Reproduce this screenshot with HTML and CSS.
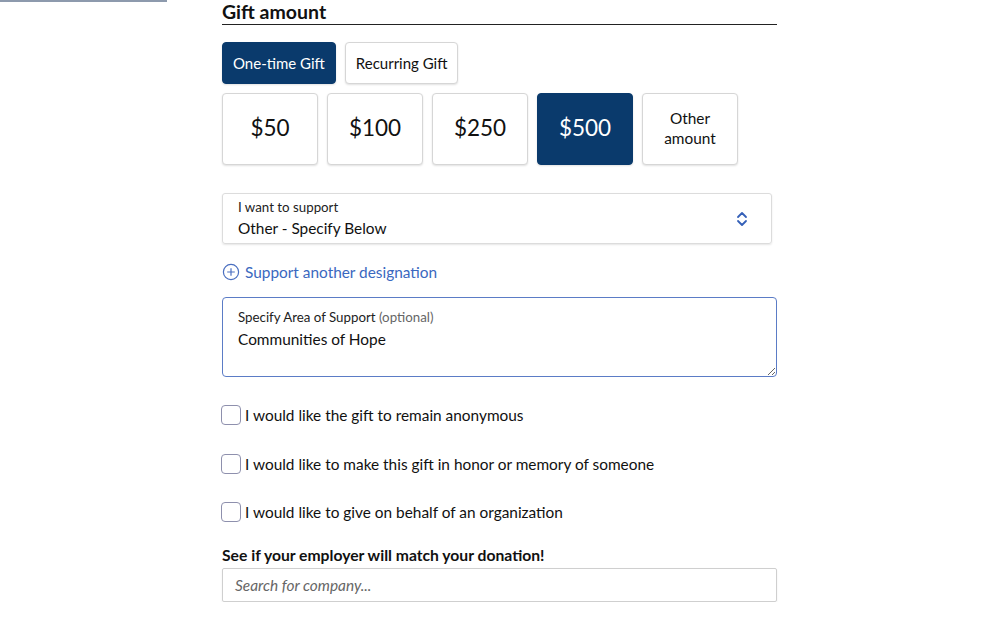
FILE: index.html
```html
<!DOCTYPE html>
<html lang="en">
<head>
<meta charset="utf-8">
<title>Gift amount</title>
<link rel="stylesheet" href="styles.css">
</head>
<body>
<div class="page">
  <div class="side"><div class="side-line"></div></div>
  <main class="form">
    <h2 class="title">Gift amount</h2>
    <div class="freq">
      <button class="btn freq-btn active">One-time Gift</button>
      <button class="btn freq-btn">Recurring Gift</button>
    </div>
    <div class="amounts">
      <button class="btn amt">$50</button>
      <button class="btn amt">$100</button>
      <button class="btn amt">$250</button>
      <button class="btn amt active">$500</button>
      <button class="btn amt other">Other<br>amount</button>
    </div>
    <div class="select">
      <div class="select-text">
        <div class="small-label">I want to support</div>
        <div class="value">Other - Specify Below</div>
      </div>
      <svg class="chev" width="12" height="16" viewBox="0 0 12 16"><path d="M2 6 L6 2 L10 6 M2 10 L6 14 L10 10" fill="none" stroke="#3560b8" stroke-width="1.8" stroke-linecap="round" stroke-linejoin="round"/></svg>
    </div>
    <div class="add-link">
      <svg width="18" height="18" viewBox="0 0 18 18"><circle cx="9" cy="9" r="7.6" fill="none" stroke="#4a6fc0" stroke-width="1.2"/><path d="M9 5.2 V12.8 M5.2 9 H12.8" stroke="#4a6fc0" stroke-width="1.2"/></svg>
      <span>Support another designation</span>
    </div>
    <div class="area">
      <div class="small-label">Specify Area of Support <span class="opt">(optional)</span></div>
      <div class="value">Communities of Hope</div>
    </div>
    <label class="check"><span class="box"></span><span>I would like the gift to remain anonymous</span></label>
    <label class="check"><span class="box"></span><span>I would like to make this gift in honor or memory of someone</span></label>
    <label class="check"><span class="box"></span><span>I would like to give on behalf of an organization</span></label>
    <div class="match">See if your employer will match your donation!</div>
    <div class="search">Search for company...</div>
  </main>
</div>
</body>
</html>
```
FILE: styles.css
```css
html, body { margin: 0; padding: 0; background: #fff; }
body { font-family: "Lato", "Open Sans", sans-serif; color: #111; }
.page { display: flex; align-items: flex-start; }
.side { width: 167px; flex: none; }
.side-line { height: 2px; background: #8d9aad; }
.form { width: 555px; margin-left: 55px; }
.title { margin: 0; font-size: 19.5px; font-weight: 700; line-height: 24px; border-bottom: 1px solid #222; color: #111; }
.freq { display: flex; gap: 9px; margin-top: 17px; }
.btn { font-family: inherit; background: #fff; border: 1px solid #d6d6d6; border-radius: 4px; color: #111; box-shadow: 0 1px 2px rgba(0,0,0,0.12); padding: 0; cursor: pointer; }
.btn.active { background: #0a3a6c; border-color: #0a3a6c; color: #fff; }
.freq-btn { height: 42px; font-size: 15px; padding: 0 10px; }
.amounts { display: flex; gap: 9px; margin-top: 9px; }
.amt { width: 96px; height: 72px; font-size: 22.5px; padding-bottom: 3px; }
.amt.other { font-size: 15.4px; line-height: 20px; padding-bottom: 2px; }
.select { display: flex; align-items: center; width: 550px; height: 51px; box-sizing: border-box; margin-top: 28px; border: 1px solid #dcdcdc; border-radius: 3px; box-shadow: 0 1px 2px rgba(0,0,0,0.1); padding: 0 23px 0 15px; }
.select-text { flex: 1; }
.small-label { font-size: 13.3px; line-height: 16px; color: #222; }
.opt { color: #666; }
.value { font-size: 15.4px; line-height: 20px; margin-top: 3px; color: #111; }
.chev { flex: none; }
.add-link { display: flex; align-items: center; gap: 5px; margin-top: 18px; color: #3a68c0; font-size: 15.4px; line-height: 20px; }
.area { margin-top: 15px; height: 80px; box-sizing: border-box; border: 1px solid #5b7cc6; border-radius: 4px; padding: 11px 15px; resize: both; overflow: auto; }
.area .value { margin-top: 4px; }
.check { display: flex; align-items: center; gap: 4px; font-size: 15.4px; line-height: 20px; height: 20px; margin-top: 28px; }
.check + .check { margin-top: 29px; }
.check + .check + .check { margin-top: 28px; }
.box { width: 18px; height: 18px; border: 1px solid #8e90ad; border-radius: 4px; margin-left: -1px; flex: none; }
.match { font-size: 15.7px; font-weight: 700; line-height: 20px; margin-top: 23px; }
.search { margin-top: 3px; height: 34px; box-sizing: border-box; border: 1px solid #cfcfcf; border-radius: 2px; padding: 0 12px; font-size: 15.4px; line-height: 32px; font-style: italic; color: #666; box-shadow: 0 1px 2px rgba(0,0,0,0.08); }
```
